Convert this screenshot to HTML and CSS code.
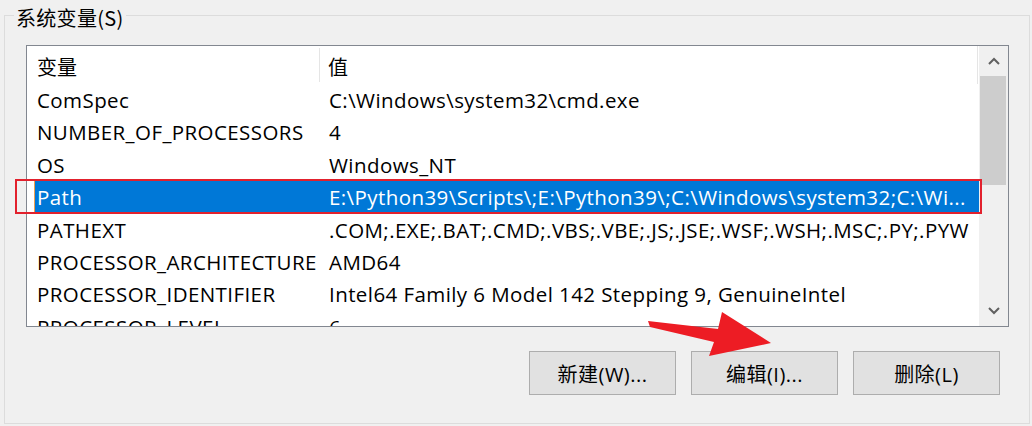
FILE: index.html
```html
<!DOCTYPE html>
<html lang="zh-CN">
<head>
<meta charset="utf-8">
<title>系统变量</title>
<link rel="stylesheet" href="styles.css">
</head>
<body>
<div class="group">
  <span class="group-title">系统变量(S)</span>
  <div class="listview">
    <div class="list">
      <div class="header">
        <div class="hcell hcell-name">变量</div>
        <div class="hcell hcell-value">值</div>
      </div>
      <div class="row"><div class="cell">ComSpec</div><div class="cell">C:\Windows\system32\cmd.exe</div></div>
      <div class="row"><div class="cell">NUMBER_OF_PROCESSORS</div><div class="cell">4</div></div>
      <div class="row"><div class="cell">OS</div><div class="cell">Windows_NT</div></div>
      <div class="row selected"><div class="cell">Path</div><div class="cell">E:\Python39\Scripts\;E:\Python39\;C:\Windows\system32;C:\Wi...</div></div>
      <div class="row"><div class="cell">PATHEXT</div><div class="cell">.COM;.EXE;.BAT;.CMD;.VBS;.VBE;.JS;.JSE;.WSF;.WSH;.MSC;.PY;.PYW</div></div>
      <div class="row"><div class="cell">PROCESSOR_ARCHITECTURE</div><div class="cell">AMD64</div></div>
      <div class="row"><div class="cell">PROCESSOR_IDENTIFIER</div><div class="cell">Intel64 Family 6 Model 142 Stepping 9, GenuineIntel</div></div>
      <div class="row"><div class="cell">PROCESSOR_LEVEL</div><div class="cell">6</div></div>
    </div>
    <div class="scrollbar">
      <div class="sb-btn">
        <svg width="12" height="8" viewBox="0 0 12 8"><polyline points="1,7 6,2 11,7" fill="none" stroke="#606060" stroke-width="2"/></svg>
      </div>
      <div class="sb-track"><div class="sb-thumb"></div></div>
      <div class="sb-btn">
        <svg width="12" height="8" viewBox="0 0 12 8"><polyline points="1,1 6,6 11,1" fill="none" stroke="#606060" stroke-width="2"/></svg>
      </div>
    </div>
  </div>
  <div class="buttons">
    <button class="btn">新建(W)...</button>
    <button class="btn">编辑(I)...</button>
    <button class="btn">删除(L)</button>
  </div>
</div>
<div class="highlight-box"></div>
<svg class="arrow" width="1032" height="426" viewBox="0 0 1032 426">
  <polygon points="648,321 718,329 722,312 771,343 709,356 714,342 650,327" fill="#ed1c24"/>
</svg>
</body>
</html>
```
FILE: styles.css
```css
html, body {
  margin: 0;
  padding: 0;
}
body {
  width: 1032px;
  height: 426px;
  overflow: hidden;
  background: #f0f0f0;
  font-family: "Open Sans", "Noto Sans CJK SC", sans-serif;
  font-size: 20px;
  color: #000;
  position: relative;
}
.group {
  position: relative;
  box-sizing: border-box;
  margin: 15px 0 0 4px;
  width: 1026px;
  height: 409px;
  border: 1px solid #dcdcdc;
  padding: 29px 29px 0 21px;
}
.group-title {
  position: absolute;
  left: 9px;
  top: -10px;
  line-height: 24px;
  padding: 0 2px;
  background: #f0f0f0;
  font-family: "Noto Sans CJK SC", sans-serif;
  font-size: 20px;
  letter-spacing: 0.3px;
}
.listview {
  box-sizing: border-box;
  width: 983px;
  height: 282px;
  border: 1px solid #828790;
  background: #fff;
  display: flex;
}
.list {
  flex: 1;
  overflow: hidden;
  display: flex;
  flex-direction: column;
}
.header {
  flex: none;
  height: 38px;
  display: grid;
  grid-template-columns: 286px 1fr;
  margin-left: 7px;
  border-right: 1px solid #e5e5e5;
  margin-right: 1px;
}
.hcell {
  box-sizing: border-box;
  padding-top: 7px;
  line-height: 28px;
  font-family: "Noto Sans CJK SC", sans-serif;
  font-size: 20px;
  white-space: nowrap;
}
.hcell-name {
  padding-left: 3px;
  border-right: 1px solid #e5e5e5;
  margin: 2px 0;
  padding-top: 5px;
}
.hcell-value {
  padding-left: 8px;
}
.row {
  flex: none;
  height: 32.4px;
  line-height: 32px;
  margin-left: 7px;
  display: grid;
  grid-template-columns: 292px 1fr;
  white-space: nowrap;
  font-size: 20.5px;
  letter-spacing: 0.42px;
}
.cell {
  padding-left: 3px;
  overflow: hidden;
}
.row.selected {
  background: #0078d7;
  color: #fff;
  box-shadow: inset 1px 0 0 #f0a050;
}
.scrollbar {
  flex: none;
  width: 29px;
  background: #f0f0f0;
  display: flex;
  flex-direction: column;
}
.sb-btn {
  flex: none;
  height: 30px;
  display: flex;
  align-items: center;
  justify-content: center;
}
.sb-track {
  flex: 1;
  padding: 0 2px 0 1px;
}
.sb-thumb {
  height: 109px;
  background: #cdcdcd;
}
.buttons {
  display: flex;
  justify-content: flex-end;
  gap: 15px;
  margin-top: 24px;
}
.btn {
  box-sizing: border-box;
  width: 147px;
  height: 44px;
  margin: 0;
  padding: 0;
  background: #e1e1e1;
  border: 1px solid #adadad;
  border-radius: 0;
  font-family: "Open Sans", "Noto Sans CJK SC", sans-serif;
  font-size: 20px;
  letter-spacing: 0.5px;
  color: #000;
}
.highlight-box {
  position: absolute;
  left: 15px;
  top: 179px;
  width: 967px;
  height: 35px;
  box-sizing: border-box;
  border: 2px solid #e2212d;
}
.arrow {
  position: absolute;
  left: 0;
  top: 0;
  pointer-events: none;
}
```
